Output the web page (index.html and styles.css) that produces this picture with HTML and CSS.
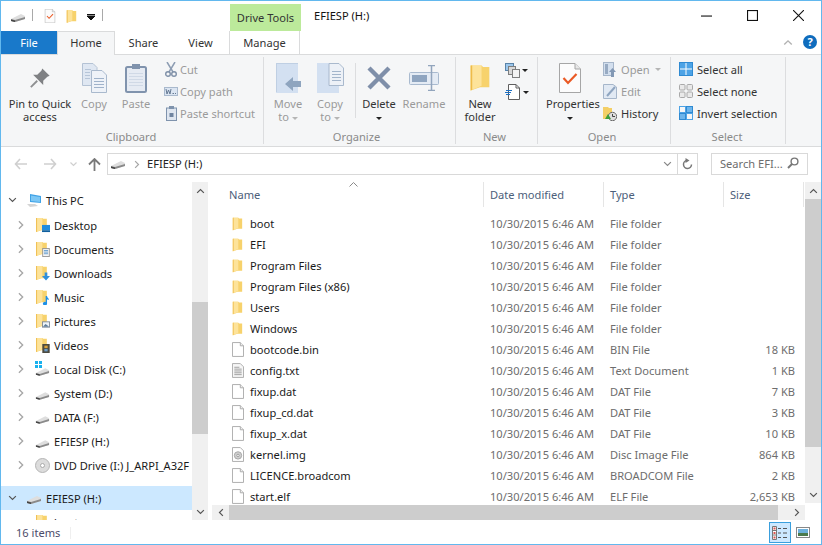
FILE: index.html
```html
<!DOCTYPE html>
<html lang="en">
<head>
    <meta charset="UTF-8">
    <title>EFIESP (H:)</title>
    <link rel="stylesheet" href="styles.css">
</head>
<body>

<svg class="defs" aria-hidden="true">
    <symbol id="drive" viewBox="0 0 16 10">
        <path d="M1 6 L11 1 L15 3 L15 6 L5 9 L1 8Z" fill="#dedede"/>
        <path d="M1 6 L5 7 L15 4 L15 6 L5 9 L1 8Z" fill="#8a8a8a"/>
        <path d="M1 6.5 L5 7.5 L5 9 L1 8Z" fill="#444"/>
    </symbol>
    <symbol id="folder" viewBox="0 0 14 18">
        <path d="M1 1 H8 L9 2 H13 V15 H7 L1 17Z" fill="#f7d26c"/>
        <path d="M1 1 H8 V14 L1 17Z" fill="#fde39a"/>
        <path d="M1 1 V17 L2 16.6 V1Z" fill="#eebb4a"/>
    </symbol>
    <symbol id="file" viewBox="0 0 13 16">
        <path d="M.5 .5 H9 L12.5 4 V15.5 H.5Z" fill="#fff" stroke="#a8a8a8"/>
        <path d="M9 .5 V4 H12.5" fill="#eee" stroke="#a8a8a8"/>
    </symbol>
    <symbol id="textfile" viewBox="0 0 13 16">
        <path d="M.5 .5 H9 L12.5 4 V15.5 H.5Z" fill="#f6f6f6" stroke="#a8a8a8"/>
        <path d="M2.5 4.5 H8 M2.5 6.5 H10.5 M2.5 8.5 H10.5 M2.5 10.5 H10.5 M2.5 12.5 H10.5" stroke="#9a9a9a"/>
    </symbol>
    <symbol id="imgfile" viewBox="0 0 13 16">
        <path d="M.5 .5 H9 L12.5 4 V15.5 H.5Z" fill="#fff" stroke="#a8a8a8"/>
        <circle cx="6.5" cy="9" r="4" fill="#cfcfcf" stroke="#a5a5a5"/>
        <circle cx="6.5" cy="9" r="1.3" fill="#fff" stroke="#999"/>
    </symbol>
    <symbol id="chev-right" viewBox="0 0 8 12">
        <path d="M1.5 1.5 L6 6 L1.5 10.5" fill="none" stroke="#a6a6a6" stroke-width="1.6"/>
    </symbol>
    <symbol id="chev-down" viewBox="0 0 12 8">
        <path d="M1.5 1.5 L6 6 L10.5 1.5" fill="none" stroke="#555" stroke-width="1.6"/>
    </symbol>
    <symbol id="chev-up" viewBox="0 0 12 8">
        <path d="M1.5 6.5 L6 2 L10.5 6.5" fill="none" stroke="#555" stroke-width="1.6"/>
    </symbol>
    <symbol id="chev-left" viewBox="0 0 8 12">
        <path d="M6.5 1.5 L2 6 L6.5 10.5" fill="none" stroke="#555" stroke-width="1.6"/>
    </symbol>
    <symbol id="chev-right-dark" viewBox="0 0 8 12">
        <path d="M1.5 1.5 L6 6 L1.5 10.5" fill="none" stroke="#555" stroke-width="1.6"/>
    </symbol>
    <symbol id="check-page" viewBox="0 0 22 30">
        <path d="M.5 .5 H16 L21.5 6 V29.5 H.5Z" fill="#fcfcfc" stroke="#a6a6a6"/>
        <path d="M16 .5 V6 H21.5" fill="#e8e8e8" stroke="#a6a6a6"/>
        <path d="M4.5 15 L9 20 L17.5 11" fill="none" stroke="#ea5a25" stroke-width="2.2"/>
    </symbol>
</svg>

<div class="window">

    <div class="titlebar">
        <div class="qat">
            <svg class="qat-drive"><use href="#drive"/></svg>
            <span class="qat-sep"></span>
            <svg class="qat-check"><use href="#check-page"/></svg>
            <svg class="qat-folder"><use href="#folder"/></svg>
            <svg class="qat-more" viewBox="0 0 8 6"><path d="M0 .5 H8 M0 2 H8 L4 6Z" stroke="#111" stroke-width="1" fill="#111"/></svg>
            <span class="qat-sep"></span>
        </div>
        <div class="context-tab">Drive Tools</div>
        <div class="window-title">EFIESP (H:)</div>
        <div class="window-controls">
            <div class="win-btn"><svg viewBox="0 0 10 10"><path d="M0 5.5 H10" stroke="#111"/></svg></div>
            <div class="win-btn"><svg viewBox="0 0 10 10"><rect x=".5" y=".5" width="9" height="9" fill="none" stroke="#111"/></svg></div>
            <div class="win-btn"><svg viewBox="0 0 10 10"><path d="M0 0 L10 10 M10 0 L0 10" stroke="#111"/></svg></div>
        </div>
    </div>

    <div class="tabs">
        <div class="tab tab-file">File</div>
        <div class="tab tab-home">Home</div>
        <div class="tab tab-share">Share</div>
        <div class="tab tab-view">View</div>
        <div class="tab tab-manage">Manage</div>
        <svg class="ribbon-toggle"><use href="#chev-up"/></svg>
        <div class="help">?</div>
    </div>

    <div class="ribbon">
        <section class="group g-clipboard">
            <div class="group-body">
                <div class="big w-pin">
                    <div class="big-icon">
                        <svg width="22" height="22" viewBox="0 0 24 24"><path d="M14.5 1.5 L22.5 9.5 L20 10.5 L15.5 15 L15.5 19.5 L4.5 8.5 L9 8.5 L13.5 4Z" fill="#7f8184"/><path d="M9 15 L2 22" stroke="#8e8f91" stroke-width="2"/></svg>
                    </div>
                    <div class="big-label">Pin to Quick<br>access</div>
                </div>
                <div class="big w-copy off">
                    <div class="big-icon">
                        <svg width="25" height="30" viewBox="0 0 25 30">
                            <path d="M.5 .5 H11 L15 4.5 V22.5 H.5Z" fill="#dfe7f2" stroke="#b4c2d4"/>
                            <path d="M9.5 7.5 H20 L24.5 12 V29.5 H9.5Z" fill="#eef2f8" stroke="#a9b9cd"/>
                            <path d="M12 15.5 H22 M12 18.5 H22 M12 21.5 H22 M12 24.5 H22" stroke="#9fb2ca"/>
                            <path d="M3 6.5 H9 M3 9.5 H8 M3 12.5 H8 M3 15.5 H8" stroke="#b6c5d8"/>
                        </svg>
                    </div>
                    <div class="big-label">Copy</div>
                </div>
                <div class="big w-paste off">
                    <div class="big-icon">
                        <svg width="22" height="30" viewBox="0 0 22 30">
                            <rect x="1" y="4" width="20" height="25" rx="1.5" fill="#e6ebf3" stroke="#8093ad" stroke-width="2"/>
                            <rect x="7" y="1" width="8" height="5" fill="#8093ad"/>
                            <path d="M4 10.5 H18 M4 13.5 H18 M4 16.5 H18 M4 19.5 H18 M4 22.5 H18" stroke="#d0d9e6"/>
                        </svg>
                    </div>
                    <div class="big-label">Paste</div>
                </div>
                <div class="small-col">
                    <div class="small off"><span class="small-icon">
                        <svg width="12" height="15" viewBox="0 0 12 15"><path d="M2 0 L8 10 M10 0 L4 10" stroke="#8d9db3" stroke-width="1.5"/><circle cx="3" cy="12" r="2.3" fill="none" stroke="#7f90a8" stroke-width="1.4"/><circle cx="9" cy="12" r="2.3" fill="none" stroke="#7f90a8" stroke-width="1.4"/></svg>
                    </span>Cut</div>
                    <div class="small off"><span class="small-icon">
                        <svg width="14" height="9" viewBox="0 0 14 9"><rect x=".5" y=".5" width="13" height="8" fill="#dbe5f2" stroke="#a9b9cd"/><path d="M2 2 L3 7 L4.5 3 L6 7 L7 2 M8.5 6.5 H10 M11 6.5 H12" fill="none" stroke="#667a94"/></svg>
                    </span>Copy path</div>
                    <div class="small off"><span class="small-icon">
                        <svg width="11" height="15" viewBox="0 0 11 15"><rect x=".5" y="2" width="10" height="12.5" fill="#dfe6f0" stroke="#7f93ad"/><rect x="3" y="0" width="5" height="3" fill="#7f93ad"/><path d="M3.5 7 H7.5 V11 H3.5Z" fill="#6f84a0"/></svg>
                    </span>Paste shortcut</div>
                </div>
            </div>
            <div class="group-label">Clipboard</div>
        </section>

        <section class="group g-organize">
            <div class="group-body">
                <div class="big w-move off">
                    <div class="big-icon">
                        <svg width="27" height="30" viewBox="0 0 27 30"><rect x="1" y="0" width="22" height="30" fill="#d3e0f1"/><path d="M1 0 H23 V1 H2 V29 H1Z" fill="#bfcfe3"/><path d="M10 21 L18 14 V18 H26 V24 H18 V28Z" fill="#8fa5bf"/></svg>
                    </div>
                    <div class="big-label">Move<br>to <i class="caret-off"></i></div>
                </div>
                <div class="big w-copyto off">
                    <div class="big-icon">
                        <svg width="27" height="30" viewBox="0 0 27 30"><rect x="0" y="0" width="22" height="30" fill="#d3e0f1"/><path d="M12 .5 H22 L26.5 5 V22.5 H12Z" fill="#edf1f7" stroke="#a9b9cd"/><path d="M15 8.5 H24 M15 11.5 H24 M15 14.5 H24 M15 17.5 H24" stroke="#a3b5cb"/></svg>
                    </div>
                    <div class="big-label">Copy<br>to <i class="caret-off"></i></div>
                </div>
                <span class="inner-sep"></span>
                <div class="big w-delete">
                    <div class="big-icon">
                        <svg width="24" height="24" viewBox="0 0 24 24"><path d="M2 2 L22 22 M22 2 L2 22" stroke="#7f8fa9" stroke-width="4.4"/></svg>
                    </div>
                    <div class="big-label">Delete<br><i class="caret"></i></div>
                </div>
                <div class="big w-rename off">
                    <div class="big-icon">
                        <svg width="30" height="26" viewBox="0 0 30 26"><rect x=".5" y="7.5" width="29" height="12" rx="1" fill="#e4ebf4" stroke="#a9bacf"/><rect x="3" y="10" width="15" height="7" fill="#8fa5c0"/><path d="M19 .5 H26 M19 25.5 H26 M22.5 .5 V25.5" stroke="#92a5bd" stroke-width="1.5"/></svg>
                    </div>
                    <div class="big-label">Rename</div>
                </div>
            </div>
            <div class="group-label">Organize</div>
        </section>

        <section class="group g-new">
            <div class="group-body">
                <div class="big w-newfolder">
                    <div class="big-icon">
                        <svg width="22" height="28"><use href="#folder"/></svg>
                    </div>
                    <div class="big-label on">New<br>folder</div>
                </div>
                <div class="new-col">
                    <div class="new-item">
                        <svg width="15" height="15" viewBox="0 0 15 15"><rect x=".5" y=".5" width="8" height="7" fill="#9cc7ec" stroke="#5a83a8"/><rect x="3.5" y="3.5" width="7" height="8" fill="#d8d8d8" stroke="#7e7e7e"/><rect x="7.5" y="6.5" width="7" height="8" fill="#f3f3f3" stroke="#7e7e7e"/></svg>
                        <i class="caret"></i>
                    </div>
                    <div class="new-item">
                        <svg width="16" height="16" viewBox="0 0 16 16"><path d="M3.5 .5 H11 L14.5 4 V15.5 H3.5Z" fill="#fff" stroke="#5f5f5f"/><path d="M11 .5 V4 H14.5" fill="none" stroke="#5f5f5f"/><path d="M1 6.5 H7 M0 8.5 H6 M1 10.5 H5" stroke="#1c6fc2"/></svg>
                        <i class="caret"></i>
                    </div>
                </div>
            </div>
            <div class="group-label">New</div>
        </section>

        <section class="group g-open">
            <div class="group-body">
                <div class="big w-props">
                    <div class="big-icon">
                        <svg width="22" height="30"><use href="#check-page"/></svg>
                    </div>
                    <div class="big-label on">Properties<br><i class="caret"></i></div>
                </div>
                <div class="small-col">
                    <div class="small off"><span class="small-icon">
                        <svg width="14" height="15" viewBox="0 0 14 15"><rect x=".5" y=".5" width="10" height="13" fill="#d3dfee" stroke="#a6b6ca"/><rect x="2" y="2" width="3" height="10" fill="#98abc3"/><path d="M6 10 L9.5 6 L13 10 H11 V15 H8 V10Z" fill="#8298b4"/></svg>
                    </span>Open <i class="caret-off"></i></div>
                    <div class="small off"><span class="small-icon">
                        <svg width="14" height="15" viewBox="0 0 14 15"><path d="M.5 .5 H10 L13.5 3 V14.5 H.5Z" fill="#e1e9f3" stroke="#a6b6ca"/><path d="M4 12 L12 3" stroke="#8fa5c0" stroke-width="2"/></svg>
                    </span>Edit</div>
                    <div class="small"><span class="small-icon">
                        <svg width="14" height="15" viewBox="0 0 14 15"><path d="M0 1 H5 L6 2 H9 V13 H0Z" fill="#f4cf66"/><circle cx="9.5" cy="10.5" r="4.2" fill="#dfdfdf" stroke="#6c6c6c"/><path d="M9.5 8 V10.5 H12" fill="none" stroke="#444"/><path d="M2 13 L5 8 L8 13Z" fill="#3e9e3a"/></svg>
                    </span>History</div>
                </div>
            </div>
            <div class="group-label">Open</div>
        </section>

        <section class="group g-select">
            <div class="group-body">
                <div class="small-col">
                    <div class="small"><span class="small-icon">
                        <svg width="14" height="14" viewBox="0 0 14 14"><path d="M0 0 H14 V14 H0Z" fill="#4da3e6"/><path d="M7 0 V14 M0 7 H14" stroke="#fff"/><rect x=".5" y=".5" width="13" height="13" fill="none" stroke="#2f8ad2"/></svg>
                    </span>Select all</div>
                    <div class="small"><span class="small-icon">
                        <svg width="14" height="14" viewBox="0 0 14 14"><g fill="#e9e9e9" stroke="#a9a9a9"><rect x=".5" y=".5" width="5.5" height="5.5" rx="1"/><rect x="8" y=".5" width="5.5" height="5.5" rx="1"/><rect x=".5" y="8" width="5.5" height="5.5" rx="1"/><rect x="8" y="8" width="5.5" height="5.5" rx="1"/></g></svg>
                    </span>Select none</div>
                    <div class="small"><span class="small-icon">
                        <svg width="14" height="14" viewBox="0 0 14 14"><rect x=".5" y=".5" width="6" height="6" fill="#f5f6f7" stroke="#4da3e6"/><rect x="7.5" y=".5" width="6" height="6" fill="#6db5ec" stroke="#2f8ad2"/><rect x=".5" y="7.5" width="6" height="6" fill="#6db5ec" stroke="#2f8ad2"/><rect x="7.5" y="7.5" width="6" height="6" fill="#f5f6f7" stroke="#4da3e6"/></svg>
                    </span>Invert selection</div>
                </div>
            </div>
            <div class="group-label">Select</div>
        </section>
    </div>

    <div class="addressbar">
        <div class="nav-btn nb-back"><svg width="13" height="12" viewBox="0 0 13 12"><path d="M6 1 L1.5 6 L6 11 M1.5 6 H13" fill="none" stroke="#cfcfcf" stroke-width="1.6"/></svg></div>
        <div class="nav-btn nb-fwd"><svg width="13" height="12" viewBox="0 0 13 12"><path d="M7 1 L11.5 6 L7 11 M11.5 6 H0" fill="none" stroke="#cfcfcf" stroke-width="1.6"/></svg></div>
        <div class="nav-btn nb-drop"><svg width="7" height="5" viewBox="0 0 7 5"><path d="M.5 .5 L3.5 3.5 L6.5 .5" fill="none" stroke="#cfcfcf" stroke-width="1.2"/></svg></div>
        <div class="nav-btn nb-up"><svg width="13" height="13" viewBox="0 0 13 13"><path d="M1 6.5 L6.5 1 L12 6.5 M6.5 1 V13" fill="none" stroke="#7a7a7a" stroke-width="1.8"/></svg></div>
        <div class="address">
            <svg class="addr-drive"><use href="#drive"/></svg>
            <svg class="addr-chev"><use href="#chev-right"/></svg>
            <span class="addr-text">EFIESP (H:)</span>
            <svg class="addr-drop"><use href="#chev-down"/></svg>
            <div class="addr-refresh"><svg width="11" height="12" viewBox="0 0 11 12"><path d="M5 2.5 A4 4 0 1 0 9.5 6.5" fill="none" stroke="#777" stroke-width="1.5"/><path d="M3.5 0 L7.5 2.5 L3.5 5Z" fill="#777"/></svg></div>
        </div>
        <div class="search">
            <span>Search EFI...</span>
            <svg width="12" height="12" viewBox="0 0 12 12"><circle cx="7.5" cy="4.5" r="3.4" fill="none" stroke="#777" stroke-width="1.4"/><path d="M5 7 L1 11" stroke="#777" stroke-width="2"/></svg>
        </div>
    </div>

    <div class="main">
        <nav class="tree">
            <div class="tree-row top"><svg class="tw"><use href="#chev-down"/></svg>
                <svg class="tree-icon" width="16" height="15" viewBox="0 0 16 15"><path d="M4 1 L15 3 V10 L4 9Z" fill="#3fa2e6"/><path d="M5 2.5 L14 4 V9 L5 8Z" fill="#7cc7f5"/><path d="M1 11 L9 11 L12 13 L4 14Z" fill="#d5d5d5"/></svg>
                <span>This PC</span></div>
            <div class="tree-row"><svg class="tw"><use href="#chev-right"/></svg>
                <span class="fld"><svg width="13" height="16"><use href="#folder"/></svg><svg class="badge" viewBox="0 0 9 8"><rect width="9" height="6" fill="#1d8ce0"/><rect y="6" width="9" height="2" fill="#0f5f9e"/></svg></span>
                <span>Desktop</span></div>
            <div class="tree-row"><svg class="tw"><use href="#chev-right"/></svg>
                <span class="fld"><svg width="13" height="16"><use href="#folder"/></svg><svg class="badge" viewBox="0 0 9 11"><rect x=".5" y=".5" width="8" height="10" fill="#f5f5f5" stroke="#8c8c8c"/><path d="M2 3 H7 M2 5 H7 M2 7 H7" stroke="#4d90c9"/></svg></span>
                <span>Documents</span></div>
            <div class="tree-row"><svg class="tw"><use href="#chev-right"/></svg>
                <span class="fld"><svg width="13" height="16"><use href="#folder"/></svg><svg class="badge" viewBox="0 0 9 9"><path d="M3 0 H6 V4 H9 L4.5 9 L0 4 H3Z" fill="#2f8fdc"/></svg></span>
                <span>Downloads</span></div>
            <div class="tree-row"><svg class="tw"><use href="#chev-right"/></svg>
                <span class="fld"><svg width="13" height="16"><use href="#folder"/></svg><svg class="badge" viewBox="0 0 9 13"><path d="M4 0 H6 C6 3 9 3 9 6 C8 5 7 5 6 5 V10.5 A3 2.5 0 1 1 4 8.5Z" fill="#1e90e6"/></svg></span>
                <span>Music</span></div>
            <div class="tree-row"><svg class="tw"><use href="#chev-right"/></svg>
                <span class="fld"><svg width="13" height="16"><use href="#folder"/></svg><svg class="badge" viewBox="0 0 9 7"><rect x=".5" y=".5" width="8" height="6" fill="#eef3f8" stroke="#7d8896"/><path d="M1 6 L4 3 L8 6Z" fill="#5f7d9a"/></svg></span>
                <span>Pictures</span></div>
            <div class="tree-row"><svg class="tw"><use href="#chev-right"/></svg>
                <span class="fld"><svg width="13" height="16"><use href="#folder"/></svg><svg class="badge" viewBox="0 0 9 11"><rect width="9" height="11" fill="#4c4a3f"/><rect x="2.5" y="2" width="4" height="3" fill="#d8a23c"/><rect x="2.5" y="6" width="4" height="3" fill="#6c9bc6"/></svg></span>
                <span>Videos</span></div>
            <div class="tree-row"><svg class="tw"><use href="#chev-right"/></svg>
                <span class="fld"><svg class="fld-drive"><use href="#drive"/></svg><svg class="win-logo" viewBox="0 0 7 7"><path d="M0 0 H3 V3 H0Z M4 0 H7 V3 H4Z M0 4 H3 V7 H0Z M4 4 H7 V7 H4Z" fill="#18b1ee"/></svg></span>
                <span>Local Disk (C:)</span></div>
            <div class="tree-row"><svg class="tw"><use href="#chev-right"/></svg>
                <span class="fld"><svg class="fld-drive"><use href="#drive"/></svg></span>
                <span>System (D:)</span></div>
            <div class="tree-row"><svg class="tw"><use href="#chev-right"/></svg>
                <span class="fld"><svg class="fld-drive"><use href="#drive"/></svg></span>
                <span>DATA (F:)</span></div>
            <div class="tree-row"><svg class="tw"><use href="#chev-right"/></svg>
                <span class="fld"><svg class="fld-drive"><use href="#drive"/></svg></span>
                <span>EFIESP (H:)</span></div>
            <div class="tree-row"><svg class="tw"><use href="#chev-right"/></svg>
                <span class="fld"><svg width="15" height="15" viewBox="0 0 15 15"><circle cx="7.5" cy="7.5" r="7" fill="#dcdcdc" stroke="#b5b5b5"/><circle cx="7.5" cy="7.5" r="2" fill="#fff" stroke="#aaa"/></svg></span>
                <span class="clip">DVD Drive (I:) J_ARPI_A32F</span></div>
            <div class="tree-row top selected"><svg class="tw"><use href="#chev-down"/></svg>
                <svg class="tree-icon tree-drive"><use href="#drive"/></svg>
                <span>EFIESP (H:)</span></div>
            <div class="tree-row"><span class="tw-space"></span>
                <span class="fld"><svg width="13" height="16"><use href="#folder"/></svg></span>
                <span>boot</span></div>
        </nav>

        <div class="scroll-v tree-scroll">
            <div class="sb-btn"><svg><use href="#chev-up"/></svg></div>
            <div class="sb-gap tree-gap-a"></div>
            <div class="sb-thumb tree-thumb"></div>
            <div class="sb-gap"></div>
            <div class="sb-btn"><svg><use href="#chev-down"/></svg></div>
        </div>

        <div class="content">
            <div class="content-top">
                <div class="listing">
                    <div class="sort-mark"><svg viewBox="0 0 9 5"><path d="M.5 4.5 L4.5 .5 L8.5 4.5" fill="none" stroke="#8a8a8a"/></svg></div>
                    <div class="columns">
                        <div class="col c-name">Name</div>
                        <div class="col c-date">Date modified</div>
                        <div class="col c-type">Type</div>
                        <div class="col c-size">Size</div>
                    </div>
                    <div class="rows">
                        <div class="row"><div class="c-name n"><svg class="i-folder"><use href="#folder"/></svg>boot</div><div class="c-date">10/30/2015 6:46 AM</div><div class="c-type">File folder</div><div class="c-size"></div></div>
                        <div class="row"><div class="c-name n"><svg class="i-folder"><use href="#folder"/></svg>EFI</div><div class="c-date">10/30/2015 6:46 AM</div><div class="c-type">File folder</div><div class="c-size"></div></div>
                        <div class="row"><div class="c-name n"><svg class="i-folder"><use href="#folder"/></svg>Program Files</div><div class="c-date">10/30/2015 6:46 AM</div><div class="c-type">File folder</div><div class="c-size"></div></div>
                        <div class="row"><div class="c-name n"><svg class="i-folder"><use href="#folder"/></svg>Program Files (x86)</div><div class="c-date">10/30/2015 6:46 AM</div><div class="c-type">File folder</div><div class="c-size"></div></div>
                        <div class="row"><div class="c-name n"><svg class="i-folder"><use href="#folder"/></svg>Users</div><div class="c-date">10/30/2015 6:46 AM</div><div class="c-type">File folder</div><div class="c-size"></div></div>
                        <div class="row"><div class="c-name n"><svg class="i-folder"><use href="#folder"/></svg>Windows</div><div class="c-date">10/30/2015 6:46 AM</div><div class="c-type">File folder</div><div class="c-size"></div></div>
                        <div class="row"><div class="c-name n"><svg class="i-file"><use href="#file"/></svg>bootcode.bin</div><div class="c-date">10/30/2015 6:46 AM</div><div class="c-type">BIN File</div><div class="c-size">18 KB</div></div>
                        <div class="row"><div class="c-name n"><svg class="i-file"><use href="#textfile"/></svg>config.txt</div><div class="c-date">10/30/2015 6:46 AM</div><div class="c-type">Text Document</div><div class="c-size">1 KB</div></div>
                        <div class="row"><div class="c-name n"><svg class="i-file"><use href="#file"/></svg>fixup.dat</div><div class="c-date">10/30/2015 6:46 AM</div><div class="c-type">DAT File</div><div class="c-size">7 KB</div></div>
                        <div class="row"><div class="c-name n"><svg class="i-file"><use href="#file"/></svg>fixup_cd.dat</div><div class="c-date">10/30/2015 6:46 AM</div><div class="c-type">DAT File</div><div class="c-size">3 KB</div></div>
                        <div class="row"><div class="c-name n"><svg class="i-file"><use href="#file"/></svg>fixup_x.dat</div><div class="c-date">10/30/2015 6:46 AM</div><div class="c-type">DAT File</div><div class="c-size">10 KB</div></div>
                        <div class="row"><div class="c-name n"><svg class="i-file"><use href="#imgfile"/></svg>kernel.img</div><div class="c-date">10/30/2015 6:46 AM</div><div class="c-type">Disc Image File</div><div class="c-size">864 KB</div></div>
                        <div class="row"><div class="c-name n"><svg class="i-file"><use href="#file"/></svg>LICENCE.broadcom</div><div class="c-date">10/30/2015 6:46 AM</div><div class="c-type">BROADCOM File</div><div class="c-size">2 KB</div></div>
                        <div class="row"><div class="c-name n"><svg class="i-file"><use href="#file"/></svg>start.elf</div><div class="c-date">10/30/2015 6:46 AM</div><div class="c-type">ELF File</div><div class="c-size">2,653 KB</div></div>
                    </div>
                </div>
                <div class="scroll-v list-scroll">
                    <div class="sb-btn"><svg><use href="#chev-up"/></svg></div>
                    <div class="sb-thumb list-thumb"></div>
                    <div class="sb-gap"></div>
                    <div class="sb-btn"><svg><use href="#chev-down"/></svg></div>
                </div>
            </div>
            <div class="scroll-h">
                <div class="sb-btn-h"><svg><use href="#chev-left"/></svg></div>
                <div class="sb-thumb h-thumb"></div>
                <div class="sb-gap"></div>
                <div class="sb-btn-h"><svg><use href="#chev-right-dark"/></svg></div>
            </div>
        </div>
    </div>

    <div class="statusbar">
        <span class="item-count">16 items</span>
        <span class="status-sep"></span>
        <div class="view-btn active"><svg width="16" height="14" viewBox="0 0 16 14"><path d="M.5 .5 H4.5 V13.5 H.5Z" fill="#fff" stroke="#777"/><path d="M1 4.5 H4 M1 9 H4" stroke="#777"/><rect x="1.5" y="1.5" width="2" height="2" fill="#d9534f"/><rect x="1.5" y="6" width="2" height="2" fill="#d9534f"/><rect x="1.5" y="10.5" width="2" height="2" fill="#d9534f"/><path d="M6 2.5 H9 M11 2.5 H15 M6 7 H9 M11 7 H15 M6 11.5 H9 M11 11.5 H15" stroke="#555"/></svg></div>
        <div class="view-btn"><svg width="14" height="11" viewBox="0 0 14 11"><rect x=".5" y=".5" width="13" height="10" fill="#fff" stroke="#888"/><rect x="2" y="2" width="10" height="4" fill="#6db1dc"/><rect x="2" y="6" width="10" height="3" fill="#4c7a4c"/></svg></div>
    </div>

</div>

</body>
</html>
```

FILE: styles.css
```css
* {
    box-sizing: border-box;
}

body {
    margin: 0;
    background: #fff;
    font-family: "Noto Sans", "Open Sans", sans-serif;
    font-size: 11.1px;
    color: #1a1a1a;
}

svg {
    display: block;
    flex: none;
}

.defs {
    width: 0;
    height: 0;
    position: absolute;
}

.window {
    width: 822px;
    height: 545px;
    border: 1px solid #62b8ee;
    display: flex;
    flex-direction: column;
    overflow: hidden;
    background: #fff;
}

/* title bar */
.titlebar {
    height: 30px;
    display: flex;
    flex: none;
}

.qat {
    width: 229px;
    display: flex;
    align-items: center;
    padding-left: 9px;
}

.qat-drive {
    width: 16px;
    height: 10px;
    margin-top: 3px;
}

.qat-sep {
    width: 1px;
    height: 12px;
    background: #a9a9a9;
    margin: -3px 0 0 6px;
}

.qat-check {
    width: 12px;
    height: 14px;
    margin: 0 0 0 11px;
}

.qat-folder {
    width: 11px;
    height: 15px;
    margin-left: 10px;
}

.qat-more {
    width: 8px;
    height: 6px;
    margin: 2px 0 0 10px;
}

.qat-more + .qat-sep {
    margin-left: 7px;
}

.context-tab {
    width: 71px;
    height: 27px;
    margin-top: 3px;
    background: #bcea9b;
    text-align: center;
    line-height: 27px;
    color: #333;
}

.window-title {
    margin-left: 13px;
    line-height: 30px;
    color: #111;
}

.window-controls {
    margin-left: auto;
    display: flex;
}

.win-btn {
    width: 46px;
    height: 30px;
    display: flex;
    align-items: center;
    justify-content: center;
}

.win-btn svg {
    width: 11px;
    height: 11px;
    margin-top: -1px;
}

/* tabs */
.tabs {
    height: 24px;
    flex: none;
    display: flex;
    border-bottom: 1px solid #dadbdc;
}

.tab {
    line-height: 23px;
    text-align: center;
    color: #333;
}

.tab-file {
    width: 56px;
    background: #1979ca;
    color: #fff;
}

.tab-home {
    width: 58px;
    height: 24px;
    background: #f5f6f7;
    border: 1px solid #dadbdc;
    border-bottom: none;
    border-top: none;
    box-shadow: inset 0 1px 0 #dadbdc;
}

.tab-share,
.tab-view {
    width: 57px;
}

.tab-manage {
    width: 71px;
    height: 23px;
    border-left: 1px solid #dadbdc;
    border-right: 1px solid #dadbdc;
}

.ribbon-toggle {
    width: 10px;
    height: 7px;
    margin: 8px 0 0 483px;
    opacity: .45;
}

.help {
    width: 14px;
    height: 14px;
    margin: 4px 0 0 10px;
    border-radius: 50%;
    background: #0f6cbd;
    color: #fff;
    font-weight: 700;
    font-size: 11px;
    line-height: 14px;
    text-align: center;
}

/* ribbon */
.ribbon {
    height: 92px;
    flex: none;
    display: flex;
    padding-top: 2px;
    background: #f5f6f7;
    border-bottom: 1px solid #dadbdc;
    color: #444;
}

.group {
    height: 87px;
    border-right: 1px solid #dcdddf;
    display: flex;
    flex-direction: column;
}

.g-clipboard { width: 263px; }
.g-organize { width: 192px; }
.g-new { width: 82px; }
.g-open { width: 133px; }
.g-select { width: 115px; }

.g-clipboard .group-body { padding-left: 3px; }
.g-organize .group-body { padding-left: 6px; }
.g-new .group-body { padding-left: 2px; }
.g-open .group-body { padding-left: 8px; }
.g-select .group-body { padding-left: 7px; }

.g-clipboard .group-label { padding-right: 2px; }
.g-organize .group-label { padding-right: 6px; }
.g-new .group-label { padding-right: 4px; }
.g-open .group-label { padding-right: 4px; }
.g-select .group-label { padding-right: 2px; }

.group-body {
    height: 73px;
    display: flex;
}

.group-label {
    height: 14px;
    line-height: 14px;
    text-align: center;
    color: #8a8a8a;
}

.big {
    padding-top: 5px;
    text-align: center;
    line-height: 13px;
    flex: none;
}

.big-icon {
    height: 35px;
    display: flex;
    align-items: center;
    justify-content: center;
    padding-bottom: 4px;
}

.big-label {
    white-space: nowrap;
    color: #333;
}

.off,
.off .big-label {
    color: #9a9a9a;
}

.w-pin { width: 72px; }
.w-copy { width: 36px; }
.w-paste { width: 36px; margin-left: 6px; }
.w-move { width: 36px; }
.w-copyto { width: 36px; margin-left: 6px; }
.w-delete { width: 44px; margin-left: 1px; }
.w-rename { width: 46px; }
.w-newfolder { width: 44px; }
.w-props { width: 48px; }

.inner-sep {
    width: 1px;
    height: 55px;
    margin: 6px 0 0 7px;
    background: #dcdddf;
}

.caret,
.caret-off {
    display: inline-block;
    width: 0;
    height: 0;
    border: 3px solid transparent;
    border-bottom: none;
    vertical-align: middle;
}

.caret {
    border-top: 3px solid #222;
}

.caret-off {
    border-top: 3px solid #b5b5b5;
}

.small-col {
    margin: 1px 0 0 8px;
}

.g-open .small-col {
    margin-left: 9px;
}

.g-select .small-col {
    margin-left: 0;
}

.small {
    height: 22px;
    display: flex;
    align-items: center;
    white-space: nowrap;
    color: #333;
}

.small.off {
    color: #9a9a9a;
}

.small .caret-off {
    margin-left: 5px;
}

.small-icon {
    width: 18px;
    display: flex;
    justify-content: center;
    flex: none;
}

.g-open .small-icon {
    justify-content: flex-start;
}

.g-select .small-icon {
    width: 19px;
    padding-left: 1px;
    justify-content: flex-start;
}

.new-col {
    margin: 2px 0 0 3px;
}

.new-item {
    height: 22px;
    display: flex;
    align-items: center;
    gap: 2px;
}

/* address row */
.addressbar {
    height: 35px;
    flex: none;
    display: flex;
    padding: 6px 0 0 5px;
}

.nav-btn {
    height: 22px;
    display: flex;
    align-items: center;
    justify-content: center;
}

.nb-back { width: 29px; }
.nb-fwd { width: 30px; }
.nb-drop { width: 16px; }
.nb-up { width: 26px; }

.address {
    width: 591px;
    height: 22px;
    border: 1px solid #d9d9d9;
    display: flex;
    align-items: center;
    padding-left: 2px;
}

.addr-drive {
    width: 16px;
    height: 10px;
    margin-top: 2px;
}

.addr-chev {
    width: 6px;
    height: 9px;
    margin-left: 8px;
}

.addr-text {
    margin: -2px 0 0 7px;
    color: #222;
}

.addr-drop {
    width: 9px;
    height: 6px;
    margin-left: auto;
    opacity: .7;
}

.addr-refresh {
    width: 20px;
    height: 20px;
    margin-left: 5px;
    border-left: 1px solid #d9d9d9;
    display: flex;
    align-items: center;
    justify-content: center;
}

.search {
    width: 97px;
    height: 22px;
    margin-left: 13px;
    border: 1px solid #d9d9d9;
    display: flex;
    align-items: center;
    justify-content: space-between;
    padding: 0 8px 2px;
    color: #6d6d6d;
    white-space: nowrap;
}

/* main area */
.main {
    flex: 1;
    min-height: 0;
    display: flex;
}

.tree {
    width: 191px;
    height: 338px;
    overflow: hidden;
    flex: none;
    padding-top: 6px;
}

.tree-row {
    height: 24px;
    display: flex;
    align-items: center;
    padding-left: 16px;
    white-space: nowrap;
    color: #1a1a1a;
}

.tree-row.top {
    padding-left: 7px;
    margin-bottom: 1px;
}

.tree-row.selected {
    background: #cce8ff;
    margin-top: 9px;
    margin-bottom: 0;
    height: 24px;
}

.tw {
    width: 8px;
    height: 10px;
}

.top .tw {
    width: 9px;
    height: 6px;
}

.tw-space {
    width: 8px;
}

.fld {
    width: 16px;
    height: 16px;
    margin: 0 3px 0 10px;
    position: relative;
    display: flex;
    align-items: center;
}

.fld-drive {
    width: 15px;
    height: 10px;
    margin-top: 5px;
}

.badge {
    position: absolute;
    right: 1px;
    bottom: 0;
    width: 8px;
    height: 9px;
}

.win-logo {
    position: absolute;
    left: 0;
    top: 0;
    width: 7px;
    height: 7px;
}

.tree-icon {
    margin: 0 4px 0 9px;
}

.tree-drive {
    width: 16px;
    height: 10px;
    margin-top: 3px;
}

.clip {
    width: 137px;
    overflow: hidden;
}

.scroll-v {
    width: 16px;
    height: 338px;
    flex: none;
    background: #f0f0f0;
    display: flex;
    flex-direction: column;
}

.tree-scroll {
    margin-right: 4px;
}

.sb-btn {
    height: 17px;
    flex: none;
    display: flex;
    align-items: center;
    justify-content: center;
}

.sb-btn svg {
    width: 9px;
    height: 6px;
}

.sb-thumb {
    background: #cdcdcd;
}

.sb-gap {
    flex: 1;
}

.tree-gap-a {
    flex: none;
    height: 103px;
}

.tree-thumb {
    height: 132px;
}

.content {
    flex: 1;
    min-width: 0;
    display: flex;
    flex-direction: column;
}

.content-top {
    height: 323px;
    flex: none;
    display: flex;
}

.listing {
    width: 593px;
    flex: none;
    position: relative;
    overflow: hidden;
}

.sort-mark {
    position: absolute;
    left: 137px;
    top: 0;
}

.sort-mark svg {
    width: 9px;
    height: 5px;
}

.columns {
    height: 25px;
    display: flex;
    color: #4c607a;
}

.col {
    border-right: 1px solid #e5e5e5;
    line-height: 25px;
}

.col.c-size {
    text-align: left;
    padding-left: 6px;
}

.c-name {
    width: 272px;
    padding-left: 17px;
}

.c-date {
    width: 120px;
    padding-left: 6px;
}

.c-type {
    width: 120px;
    padding-left: 6px;
}

.c-size {
    width: 80px;
    padding-right: 9px;
    text-align: right;
}

.rows {
    padding-top: 6px;
}

.row {
    height: 21px;
    display: flex;
    align-items: center;
    color: #6d6d6d;
    white-space: nowrap;
}

.n {
    display: flex;
    align-items: center;
    color: #1a1a1a;
    padding-left: 20px;
}

.i-folder {
    width: 11px;
    height: 14px;
    margin-right: 7px;
}

.i-file {
    width: 12px;
    height: 15px;
    margin-right: 6px;
}

.list-scroll {
    margin-left: auto;
    height: 321px;
}

.list-thumb {
    height: 248px;
}

.scroll-h {
    height: 15px;
    width: 593px;
    background: #f0f0f0;
    display: flex;
    flex: none;
}

.sb-btn-h {
    width: 17px;
    height: 15px;
    flex: none;
    display: flex;
    align-items: center;
    justify-content: center;
}

.sb-btn-h svg {
    width: 6px;
    height: 9px;
}

.h-thumb {
    width: 549px;
}

/* status bar */
.statusbar {
    height: 23px;
    flex: none;
    display: flex;
    align-items: center;
    padding: 0 7px 0 15px;
    color: #4c4c6a;
}

.item-count {
    width: 54px;
}

.status-sep {
    width: 1px;
    height: 12px;
    background: #efefef;
    margin-right: auto;
}

.view-btn {
    width: 22px;
    height: 21px;
    display: flex;
    align-items: center;
    justify-content: center;
    margin-left: 1px;
}

.view-btn.active {
    background: #cce8ff;
    border: 1px solid #3a9fdd;
}
```
